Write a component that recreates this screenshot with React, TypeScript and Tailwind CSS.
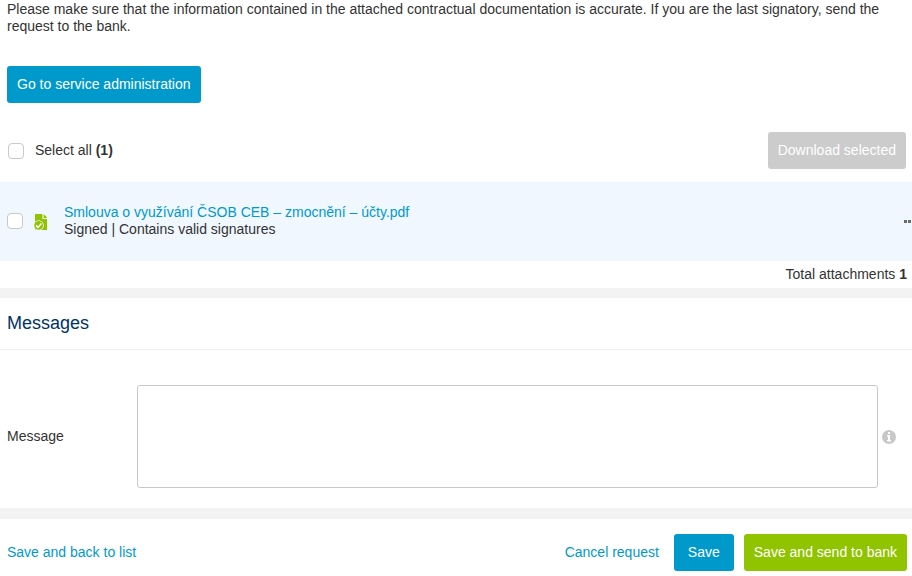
import type { ReactNode } from "react";

const buttonTones = {
  primary: "bg-[#0099cc]",
  success: "bg-[#90c300]",
  disabled: "bg-[#cccccc]",
};

function Button({
  tone,
  wide = false,
  children,
}: {
  tone: keyof typeof buttonTones;
  wide?: boolean;
  children: ReactNode;
}) {
  return (
    <button
      type="button"
      disabled={tone === "disabled"}
      className={`h-[37px] shrink-0 rounded-[3px] text-white ${wide ? "px-3.5" : "px-2.5"} ${buttonTones[tone]}`}
    >
      {children}
    </button>
  );
}

function Checkbox({ id, label }: { id: string; label?: string }) {
  return (
    <input
      id={id}
      type="checkbox"
      aria-label={label}
      className="size-4 shrink-0 appearance-none rounded-[4px] border border-[#c8c8c8] bg-white checked:bg-[#0099cc]"
    />
  );
}

function SignedFileIcon() {
  return (
    <svg width="14" height="16" viewBox="0 0 14 16" className="shrink-0" aria-hidden="true">
      <path d="M1 0H8.4V5H13V16H1Z" fill="#90c300" />
      <path d="M9.6 0L13 3.6V4H9.6Z" fill="#90c300" />
      <circle cx="4.6" cy="11.4" r="5.2" fill="#f0f7ff" />
      <circle cx="4.6" cy="11.4" r="4.4" fill="#90c300" />
      <path d="M2 11.4L4 13.4L7.4 9.6" fill="none" stroke="#fff" strokeWidth="1.5" />
    </svg>
  );
}

function InfoIcon() {
  return (
    <svg width="14" height="14" viewBox="0 0 14 14" aria-hidden="true">
      <circle cx="7" cy="7" r="7" fill="#c8c8c8" />
      <path d="M6 2H8V4H6ZM5 5H8V10H9V11.5H5V10H6V6.5H5Z" fill="#fff" />
    </svg>
  );
}

function MoreIcon() {
  return (
    <svg width="11" height="3" viewBox="0 0 11 3" fill="#6b6b6b" aria-hidden="true">
      <path d="M0 0H3V3H0ZM4 0H7V3H4ZM8 0H11V3H8Z" />
    </svg>
  );
}

export default function App() {
  return (
    <main className="overflow-hidden bg-white font-['Liberation_Sans',Arial,sans-serif] text-[14px] leading-[17px] text-[#333333]">
      <section>
        <p className="px-[7px] pt-px">
          Please make sure that the information contained in the attached contractual documentation is
          accurate. If you are the last signatory, send the request to the bank.
        </p>
        <div className="px-[7px] pt-[31px]">
          <Button tone="primary">Go to service administration</Button>
        </div>

        <div className="flex items-center pt-[29px] pr-1.5 pb-[13px] pl-2">
          <Checkbox id="select-all" />
          <label htmlFor="select-all" className="grow pl-[11px]">
            Select all <b>(1)</b>
          </label>
          <Button tone="disabled">Download selected</Button>
        </div>

        <div className="flex items-center bg-[#f0f7ff] pt-[22px] pb-[23px] pl-[7px]">
          <Checkbox id="attachment" label="Select attachment" />
          <div className="pt-0.5 pl-[11px]">
            <SignedFileIcon />
          </div>
          <div className="grow pl-4">
            <a href="#attachment" className="block text-[#0099cc]">
              Smlouva o využívání ČSOB CEB – zmocnění – účty.pdf
            </a>
            <p>Signed | Contains valid signatures</p>
          </div>
          <button type="button" aria-label="More actions" className="-mr-[3px] shrink-0">
            <MoreIcon />
          </button>
        </div>

        <p className="px-[5px] py-[5px] text-right">
          Total attachments <b>1</b>
        </p>
      </section>

      <section className="border-t-10 border-[#f3f3f3]">
        <h2 className="border-b border-[#eeeeee] px-[7px] pt-[13px] pb-3.5 text-[18px] leading-6 text-[#003366]">
          Messages
        </h2>
        <div className="flex items-center px-[7px] pt-[35px] pb-5">
          <label htmlFor="message" className="w-[130px] shrink-0">
            Message
          </label>
          <textarea
            id="message"
            className="block h-[103px] min-w-0 grow resize-none rounded-[3px] border border-[#c8c8c8] p-2"
          />
          <button type="button" aria-label="Message help" className="shrink-0 pr-[9px] pl-1">
            <InfoIcon />
          </button>
        </div>
      </section>

      <footer className="flex items-center border-t-11 border-[#f3f3f3] pt-[15px] pr-[5px] pb-[5px] pl-[7px]">
        <a href="#list" className="text-[#0099cc]">
          Save and back to list
        </a>
        <a href="#cancel" className="mr-[15px] ml-auto text-[#0099cc]">
          Cancel request
        </a>
        <div className="flex gap-2.5">
          <Button tone="primary" wide>
            Save
          </Button>
          <Button tone="success">Save and send to bank</Button>
        </div>
      </footer>
    </main>
  );
}
